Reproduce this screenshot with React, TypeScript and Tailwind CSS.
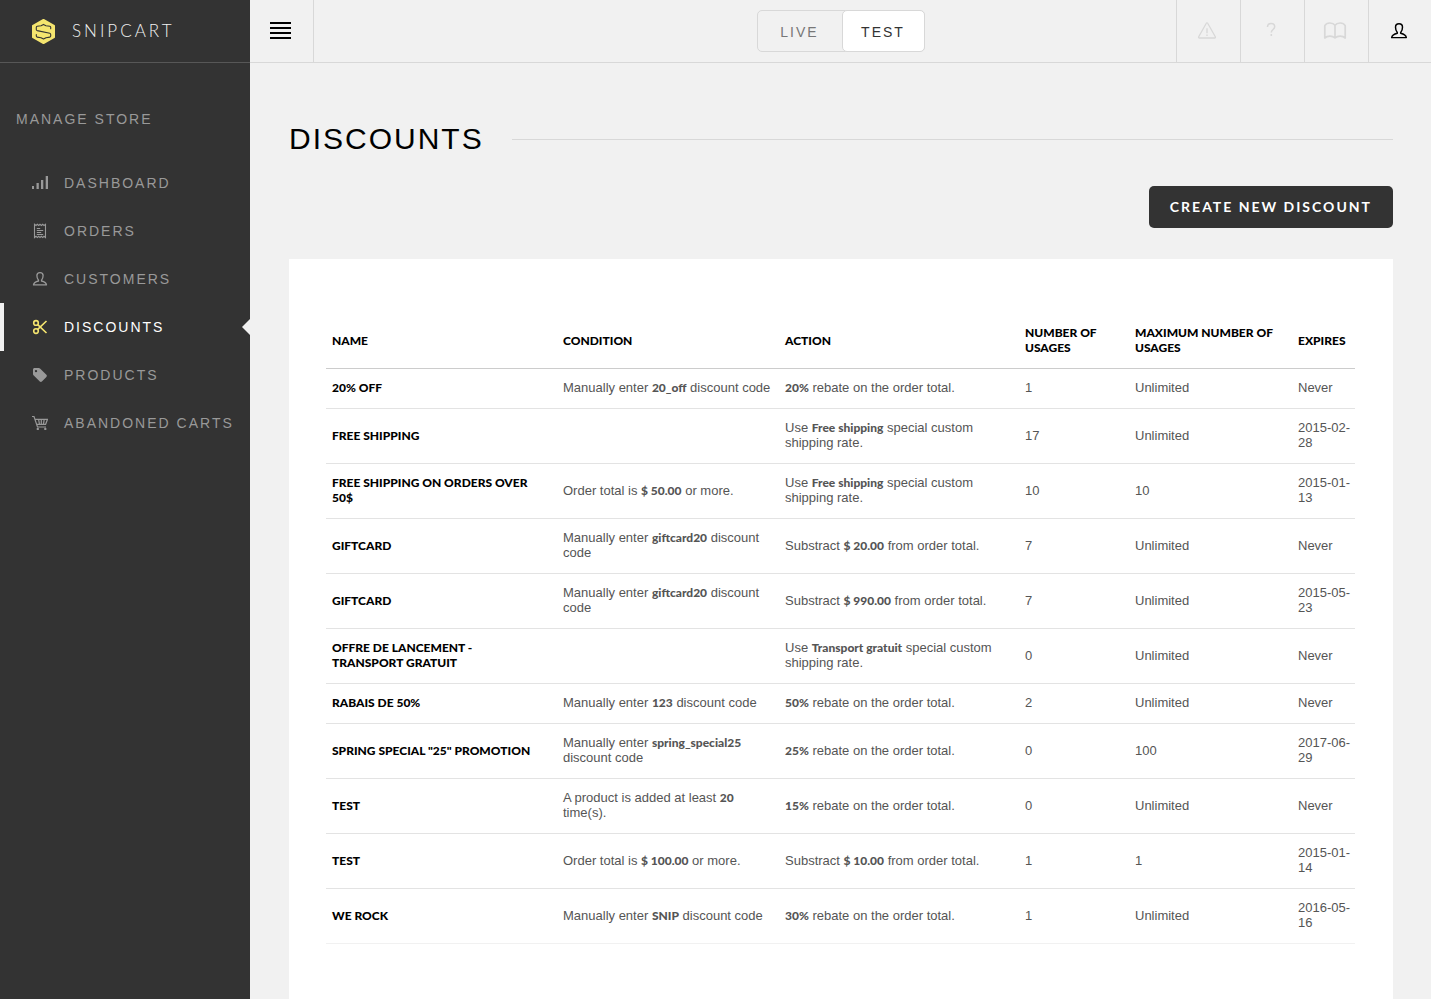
import React, { ReactNode, useState } from 'react';
import clsx from 'clsx';

interface IconProps {
  className?: string;
}

function LogoMark({ className }: IconProps) {
  return (
    <svg className={className} viewBox="0 0 23 25" fill="none">
      <path
        d="M11.5 1 22 6.8v11.4L11.5 24 1 18.2V6.8Z"
        fill="#f5e56f"
        stroke="#f5e56f"
        strokeWidth="2"
        strokeLinejoin="round"
      />
      <path
        d="M18.700 9.800V8.300c0-.6-.3-1-.9-1.100l-3.800-.5-2.500-1.300L9 6.700l-3.800.5c-.6.1-.9.500-.9 1.100v2.100c0 .6.3 1 .9 1.200l12.600 2.600c.6.2.9.6.9 1.200v1.600c0 .6-.3 1-.9 1.100l-3.800.6-2.500 1.300L9 18.700l-3.800-.6c-.6-.1-.9-.5-.9-1.100v-1.500"
        stroke="#333"
        strokeWidth="1.100"
        strokeLinejoin="round"
        strokeLinecap="round"
      />
    </svg>
  );
}

function BarsIcon({ className }: IconProps) {
  return (
    <svg className={className} viewBox="0 0 16 16" fill="currentColor">
      <path d="M0 11h2v3H0zM4.500 8h2.300v6H4.500zM9 5h2.300v9H9zM13.700 1H16v13h-2.300z" />
    </svg>
  );
}

function ReceiptIcon({ className }: IconProps) {
  return (
    <svg className={className} viewBox="0 0 16 16" fill="none" stroke="currentColor" strokeWidth="1.100">
      <path d="M2.500 1.300 4 2.500l1.350-1.200L6.700 2.500 8 1.300l1.350 1.200 1.350-1.200L12 2.500l1.500-1.200v13.200L12 13.300l-1.300 1.200-1.350-1.200L8 14.500l-1.300-1.200-1.350 1.200L4 13.300l-1.500 1.200Z" />
      <path d="M4.800 5.500h3.400M4.800 7.500h6.400M4.800 9.500h4.400M4.800 11.500h6.400" />
    </svg>
  );
}

function PersonIcon({ className }: IconProps) {
  return (
    <svg className={className} viewBox="0 0 16 16" fill="none" stroke="currentColor" strokeWidth="1.300" strokeLinejoin="round">
      <path d="M6.500 9.300C5.500 8.200 4.900 6.600 4.900 4.600 4.900 2.700 6.100 1.600 8 1.600s3.100 1.100 3.100 3c0 2-.6 3.600-1.600 4.700v.7c2.700.6 4.700 1.500 5 3.900h-13c.3-2.400 2.300-3.300 5-3.900Z" />
    </svg>
  );
}

function ScissorsIcon({ className }: IconProps) {
  return (
    <svg className={className} viewBox="0 0 16 16" fill="none" stroke="currentColor" strokeWidth="1.600">
      <circle cx="4" cy="3.900" r="2.300" />
      <circle cx="4" cy="12.100" r="2.300" />
      <path d="M5.700 5.600 14.500 14M5.700 10.400 14.500 2" />
    </svg>
  );
}

function TagIcon({ className }: IconProps) {
  return (
    <svg className={className} viewBox="0 0 16 16" fill="currentColor" fillRule="evenodd">
      <path d="M1 2.600C1 1.700 1.700 1 2.600 1h4.200c.5 0 .9.200 1.200.5l6.400 6.300c.6.6.6 1.500 0 2.100l-4.500 4.600c-.6.6-1.500.6-2.100 0L1.500 8.200c-.3-.3-.5-.7-.5-1.200ZM4 2.900A1.200 1.200 0 1 0 4 5.300 1.200 1.200 0 0 0 4 2.900Z" />
    </svg>
  );
}

function CartIcon({ className }: IconProps) {
  return (
    <svg className={className} viewBox="0 0 16 16" fill="none" stroke="currentColor" strokeWidth="1.200">
      <path d="M0 1.500h2L5.500 12H14M2.800 4.300h12.700L13.600 9.300H4.800M6.600 4.300l.9 5M9.300 4.300v5M12.200 4.300l-.8 5" />
      <circle cx="5.800" cy="13.900" r=".6" />
      <circle cx="13.300" cy="13.900" r=".6" />
    </svg>
  );
}

function WarningIcon({ className }: IconProps) {
  return (
    <svg className={className} viewBox="0 0 20 20" fill="none" stroke="currentColor" strokeWidth="1.300" strokeLinejoin="round">
      <path d="M9.300 2.300c.3-.6 1.100-.6 1.400 0l7.600 13.500c.3.600 0 1.200-.7 1.200H2.400c-.7 0-1-.6-.7-1.200Z" />
      <path d="M10 7.300v5M10 13.600v1.500" />
    </svg>
  );
}

function QuestionIcon({ className }: IconProps) {
  return (
    <svg className={className} viewBox="0 0 20 20" fill="none" stroke="currentColor" strokeWidth="1.500">
      <path d="M6.500 6.100c0-2.200 1.400-3.500 3.600-3.500s3.600 1.200 3.600 3.200c0 2.600-3.400 2.900-3.400 5.700M10.300 13.100V15" />
    </svg>
  );
}

function BookIcon({ className }: IconProps) {
  return (
    <svg className={className} viewBox="0 0 24 20" fill="none" stroke="currentColor" strokeWidth="1.700" strokeLinejoin="round">
      <path d="M12 4.300C10 1.500 4 .8 1.800 4.700V17c2.500-2.300 7.500-2.500 10.200 0 2.700-2.500 7.700-2.300 10.200 0V4.700C20 .8 14 1.500 12 4.300ZM12 4.300V17" />
    </svg>
  );
}

const NAV_ITEMS = [
  { label: 'Dashboard', Icon: BarsIcon },
  { label: 'Orders', Icon: ReceiptIcon },
  { label: 'Customers', Icon: PersonIcon },
  { label: 'Discounts', Icon: ScissorsIcon },
  { label: 'Products', Icon: TagIcon },
  { label: 'Abandoned carts', Icon: CartIcon },
];

interface Discount {
  name: string;
  condition?: ReactNode;
  action: ReactNode;
  usages: number;
  max: string;
  expires: string;
}

const DISCOUNTS: Discount[] = [
  { name: '20% off', condition: <>Manually enter <B>20_off</B> discount code</>, action: <><B>20%</B> rebate on the order total.</>, usages: 1, max: 'Unlimited', expires: 'Never' },
  { name: 'Free shipping', action: <>Use <B>Free shipping</B> special custom shipping rate.</>, usages: 17, max: 'Unlimited', expires: '2015-02-28' },
  { name: 'Free shipping on orders over 50$', condition: <>Order total is <B>$ 50.00</B> or more.</>, action: <>Use <B>Free shipping</B> special custom shipping rate.</>, usages: 10, max: '10', expires: '2015-01-13' },
  { name: 'Giftcard', condition: <>Manually enter <B>giftcard20</B> discount code</>, action: <>Substract <B>$ 20.00</B> from order total.</>, usages: 7, max: 'Unlimited', expires: 'Never' },
  { name: 'Giftcard', condition: <>Manually enter <B>giftcard20</B> discount code</>, action: <>Substract <B>$ 990.00</B> from order total.</>, usages: 7, max: 'Unlimited', expires: '2015-05-23' },
  { name: 'Offre de lancement - Transport gratuit', action: <>Use <B>Transport gratuit</B> special custom shipping rate.</>, usages: 0, max: 'Unlimited', expires: 'Never' },
  { name: 'Rabais de 50%', condition: <>Manually enter <B>123</B> discount code</>, action: <><B>50%</B> rebate on the order total.</>, usages: 2, max: 'Unlimited', expires: 'Never' },
  { name: 'Spring special "25" promotion', condition: <>Manually enter <B>spring_special25</B> discount code</>, action: <><B>25%</B> rebate on the order total.</>, usages: 0, max: '100', expires: '2017-06-29' },
  { name: 'Test', condition: <>A product is added at least <B>20</B> time(s).</>, action: <><B>15%</B> rebate on the order total.</>, usages: 0, max: 'Unlimited', expires: 'Never' },
  { name: 'Test', condition: <>Order total is <B>$ 100.00</B> or more.</>, action: <>Substract <B>$ 10.00</B> from order total.</>, usages: 1, max: '1', expires: '2015-01-14' },
  { name: 'We rock', condition: <>Manually enter <B>SNIP</B> discount code</>, action: <><B>30%</B> rebate on the order total.</>, usages: 1, max: 'Unlimited', expires: '2016-05-16' },
];

function B({ children }: { children: ReactNode }) {
  return <strong className="font-['Lato',sans-serif] text-[12px] font-black">{children}</strong>;
}

function Sidebar() {
  return (
    <aside className="w-[250px] shrink-0 bg-[#333] text-[#999]">
      <a href="#" className="flex h-[63px] items-center gap-[17px] border-b border-[#575757] pl-8 text-[#f1f1f1]">
        <LogoMark className="h-[25px] w-[23px]" />
        <span className="font-['Lato',sans-serif] text-[17px] font-light tracking-[3px]">SNIPCART</span>
      </a>
      <h2 className="mt-11 mb-7 pl-4 text-sm leading-6 tracking-[2px] uppercase">Manage store</h2>
      <nav>
        {NAV_ITEMS.map(({ label, Icon }) => {
          const active = label === 'Discounts';
          return (
            <a
              key={label}
              href="#"
              aria-current={active ? 'page' : undefined}
              className={clsx(
                'relative flex h-12 items-center gap-4 border-l-4 pl-7 text-sm tracking-[2px] whitespace-nowrap uppercase',
                active ? 'border-[#f1f1f1] text-white' : 'border-transparent'
              )}
            >
              <Icon className={clsx('size-4 shrink-0', active && 'text-[#f5e56f]')} />
              {label}
              {active && (
                <svg className="absolute top-4 right-0 h-4 w-2" viewBox="0 0 8 16" fill="#f1f1f1">
                  <path d="M8 0v16L0 8Z" />
                </svg>
              )}
            </a>
          );
        })}
      </nav>
    </aside>
  );
}

function TopBar() {
  const [mode, setMode] = useState('Test');

  return (
    <header className="grid h-[63px] grid-cols-[1fr_auto_1fr] border-b border-[#d8d8d8]">
      <button type="button" aria-label="Toggle menu" className="flex w-16 items-center border-r border-[#d8d8d8] pl-5 text-black">
        <svg className="h-5 w-[21px]" viewBox="0 0 21 20" fill="currentColor">
          <path d="M0 1h21v2H0zM0 6h21v2H0zM0 11h21v2H0zM0 16h21v2H0z" />
        </svg>
      </button>
      <div className="flex h-[42px] self-center rounded-[5px] border border-[#d8d8d8]">
        {['Live', 'Test'].map((m) => (
          <button
            key={m}
            type="button"
            aria-pressed={m === mode}
            onClick={() => setMode(m)}
            className={clsx(
              '-my-px pt-[2px] text-sm tracking-[2px] uppercase',
              m === mode
                ? '-mr-px w-[83px] rounded-[5px] border border-[#d8d8d8] bg-white text-[#333]'
                : 'w-[84px] text-[#777]'
            )}
          >
            {m}
          </button>
        ))}
      </div>
      <div className="flex justify-end text-[#d8d8d8]">
        <button type="button" aria-label="Alerts" className="flex w-16 items-center border-l border-[#d8d8d8] pl-5">
          <WarningIcon className="size-5" />
        </button>
        <button type="button" aria-label="Help" className="flex w-16 items-center border-l border-[#d8d8d8] pl-5">
          <QuestionIcon className="size-5" />
        </button>
        <button type="button" aria-label="Documentation" className="flex w-16 items-center border-l border-[#d8d8d8] pl-[18px]">
          <BookIcon className="h-5 w-6" />
        </button>
        <button type="button" aria-label="Account" className="flex w-[63px] items-center border-l border-[#d8d8d8] pl-[21px] text-black">
          <PersonIcon className="size-[18px]" />
        </button>
      </div>
    </header>
  );
}

function DiscountTable() {
  return (
    <table className="w-full table-fixed text-left text-[13px] leading-[15px] text-[#555]">
      <colgroup>
        <col className="w-[231px]" />
        <col className="w-[222px]" />
        <col />
        <col className="w-[110px]" />
        <col className="w-[163px]" />
        <col className="w-[63px]" />
      </colgroup>
      <thead>
        <tr className="border-b border-[#ccc] font-['Lato',sans-serif] text-[12px] text-black uppercase *:pt-[11px] *:pb-[13px] *:pl-[6px] *:font-black">
          <th>Name</th>
          <th>Condition</th>
          <th>Action</th>
          <th>Number of usages</th>
          <th>Maximum number of usages</th>
          <th>Expires</th>
        </tr>
      </thead>
      <tbody>
        {DISCOUNTS.map((d, i) => (
          <tr key={i} className="border-b border-[#e3e3e3] *:pt-[11px] *:pb-[13px] *:pl-[6px] last:border-[#f1f1f1]">
            <th scope="row" className="pr-3 font-['Lato',sans-serif] text-[12px] font-black text-black uppercase">{d.name}</th>
            <td>{d.condition}</td>
            <td className="pr-4">{d.action}</td>
            <td>{d.usages}</td>
            <td>{d.max}</td>
            <td>{d.expires}</td>
          </tr>
        ))}
      </tbody>
    </table>
  );
}

export default function App() {
  return (
    <div className="flex min-h-screen bg-[#f1f1f1] font-['Liberation_Sans',Arial,sans-serif]">
      <Sidebar />
      <div className="flex min-w-0 flex-1 flex-col">
        <TopBar />
        <main className="flex flex-1 flex-col pt-14 pr-[38px] pl-[39px]">
          <div className="flex h-10 items-center gap-7">
            <h1 className="text-[30px] leading-10 tracking-[2px] text-black uppercase">Discounts</h1>
            <div className="h-px flex-1 bg-[#d8d8d8]" />
          </div>
          <button
            type="button"
            className="mt-[27px] h-[42px] self-end rounded-[5px] bg-[#333] px-[21px] font-['Lato',sans-serif] text-sm font-bold tracking-[2px] text-white uppercase"
          >
            Create new discount
          </button>
          <section className="mt-[31px] flex-1 bg-white pt-[55px] pr-[38px] pb-[55px] pl-[37px]">
            <DiscountTable />
          </section>
        </main>
      </div>
    </div>
  );
}
